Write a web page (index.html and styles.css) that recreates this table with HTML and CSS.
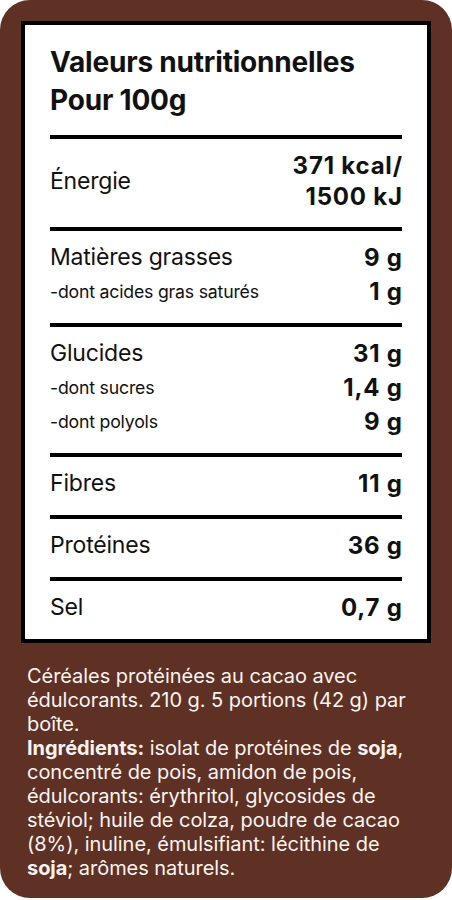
FILE: index.html
```html
<!DOCTYPE html>
<html lang="fr">
<head>
<meta charset="utf-8">
<title>Valeurs nutritionnelles</title>
<link rel="stylesheet" href="styles.css">
</head>
<body>
<div class="panel">
  <div class="card">
    <h1 class="title">Valeurs nutritionnelles<br>Pour 100g</h1>
    <section class="group group-energy">
      <div class="row">
        <span class="label">Énergie</span>
        <span class="value">371 kcal/<br>1500 kJ</span>
      </div>
    </section>
    <section class="group">
      <div class="row"><span class="label">Matières grasses</span><span class="value">9 g</span></div>
      <div class="row sub"><span class="label">-dont acides gras saturés</span><span class="value">1 g</span></div>
    </section>
    <section class="group">
      <div class="row"><span class="label">Glucides</span><span class="value">31 g</span></div>
      <div class="row sub"><span class="label">-dont sucres</span><span class="value">1,4 g</span></div>
      <div class="row sub"><span class="label">-dont polyols</span><span class="value">9 g</span></div>
    </section>
    <section class="group">
      <div class="row"><span class="label">Fibres</span><span class="value">11 g</span></div>
    </section>
    <section class="group">
      <div class="row"><span class="label">Protéines</span><span class="value">36 g</span></div>
    </section>
    <section class="group">
      <div class="row"><span class="label">Sel</span><span class="value">0,7 g</span></div>
    </section>
  </div>
  <p class="desc">Céréales protéinées au cacao avec édulcorants. 210 g. 5 portions (42 g) par boîte.<br><b>Ingrédients:</b> isolat de protéines de <b>soja</b>, concentré de pois, amidon de pois, édulcorants: érythritol, glycosides de stéviol; huile de colza, poudre de cacao (8%), inuline, émulsifiant: lécithine de <b>soja</b>; arômes naturels.</p>
</div>
</body>
</html>
```

FILE: styles.css
```css
* { box-sizing: border-box; }

html, body {
  margin: 0;
  padding: 0;
  background: #ffffff;
}

body {
  font-family: Inter, "Noto Sans", "Liberation Sans", sans-serif;
  color: #111111;
}

.panel {
  width: 452px;
  height: 898px;
  background: #5e3124;
  border-radius: 30px;
  padding: 21px 21px 0;
}

.card {
  background: #ffffff;
  border: 4px solid #000000;
  padding: 18px 25px 0;
}

.title {
  margin: 0;
  padding-bottom: 16px;
  font-size: 28px;
  font-weight: 700;
  line-height: 38px;
  letter-spacing: -0.2px;
}

.group {
  border-top: 4px solid #000000;
  padding: 11px 0 16px;
  display: flex;
  flex-direction: column;
  gap: 3px;
}

.group-energy {
  padding-bottom: 15px;
}

.row {
  display: flex;
  justify-content: space-between;
  align-items: center;
  line-height: 31px;
}

.label {
  font-size: 23px;
  font-weight: 400;
  letter-spacing: -0.2px;
}

.sub .label {
  font-size: 17.7px;
}

.value {
  font-size: 24px;
  font-weight: 700;
  text-align: right;
  letter-spacing: 0.8px;
  margin-right: -0.8px;
}

.desc {
  margin: 21px 6px 0;
  font-size: 20px;
  line-height: 24px;
  color: #faf4f0;
  letter-spacing: -0.05px;
}

.desc b {
  font-weight: 700;
}
```
